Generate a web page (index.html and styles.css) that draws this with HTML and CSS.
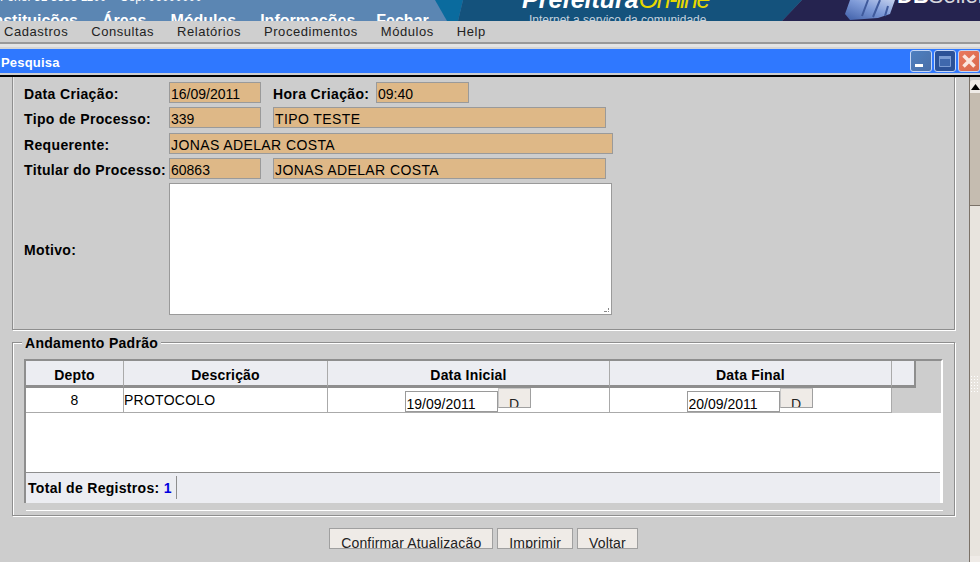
FILE: index.html
```html
<!DOCTYPE html>
<html lang="pt-BR">
<head>
<meta charset="UTF-8" />
<meta name="viewport" content="width=device-width, initial-scale=1" />
<title>Pesquisa</title>
<link rel="stylesheet" href="styles.css">
</head>
<body>
  <header class="banner">
    <svg class="banner-art" width="980" height="21" viewBox="0 0 980 21" aria-hidden="true">
      <defs>
        <linearGradient id="photo" x1="0" y1="1" x2="1" y2="0">
          <stop offset="0" stop-color="#3f5fa8" />
          <stop offset="0.55" stop-color="#7f9bd8" />
          <stop offset="1" stop-color="#c3d0ee" />
        </linearGradient>
      </defs>
      <rect width="980" height="21" fill="#5b86b3" />
      <polygon points="435,0 463,0 458,21 447,21" fill="#0a6b9e" />
      <polygon points="463,0 802,0 782,21 458,21" fill="#14527c" />
      <polygon points="802,0 980,0 980,21 782,21" fill="#25234f" />
      <polygon points="850,0 895,0 890,14 878,18 850,20 845,14" fill="url(#photo)" />
      <path d="M868 0l-6 16M880 0l-7 17M888 6l-3 10" stroke="#3f5a9c" stroke-width="2" fill="none" />
    </svg>
    <div class="banner-left">
      <p class="banner-contact">Fone: 51 3333 1100 &nbsp;&nbsp; Cep: 96000000</p>
      <nav class="banner-nav">
        <span>Instituições</span>
        <span>Áreas</span>
        <span>Módulos</span>
        <span>Informações</span>
        <span class="nav-last">Fechar</span>
      </nav>
    </div>
    <div class="brand">
      <p class="brand-name">Prefeitura<span>On-line</span></p>
      <p class="brand-sub">Internet a serviço da comunidade</p>
    </div>
    <p class="seller"><b>DB</b>Seller</p>
  </header>

  <nav class="menubar">
    <span>Cadastros</span>
    <span>Consultas</span>
    <span>Relatórios</span>
    <span>Procedimentos</span>
    <span>Módulos</span>
    <span>Help</span>
  </nav>
  <div class="menu-edge"></div>

  <div class="titlebar">
    <span class="title">Pesquisa</span>
    <div class="win-buttons">
      <button class="win-btn win-min" type="button" aria-label="Minimizar">
        <svg width="20" height="20" viewBox="0 0 20 20"><rect x="4" y="13" width="8" height="3" fill="#fff" /></svg>
      </button>
      <button class="win-btn win-max" type="button" aria-label="Maximizar">
        <svg width="20" height="20" viewBox="0 0 20 20"><path d="M4.500 5.500h11v10h-11z" fill="#3f68ad" stroke="#7a9bd3" /><rect x="4" y="5" width="12" height="3" fill="#7a9bd3" /></svg>
      </button>
      <button class="win-btn win-close" type="button" aria-label="Fechar">
        <svg width="20" height="20" viewBox="0 0 20 20"><path d="M4.500 4.500l11 11M15.500 4.500l-11 11" stroke="#fbe6df" stroke-width="3.500" /></svg>
      </button>
    </div>
  </div>
  <div class="title-edge"></div>

  <div class="window">
    <main class="content">
      <section class="group-top">
        <div class="row">
          <label class="lbl">Data Criação:</label>
          <input class="field w-short" value="16/09/2011" readonly />
          <label class="lbl lbl-hora">Hora Criação:</label>
          <input class="field w-hora" value="09:40" readonly />
        </div>
        <div class="row">
          <label class="lbl">Tipo de Processo:</label>
          <input class="field w-short" value="339" readonly />
          <input class="field w-name" value="TIPO TESTE" readonly />
        </div>
        <div class="row row-req">
          <label class="lbl">Requerente:</label>
          <input class="field w-full" value="JONAS ADELAR COSTA" readonly />
        </div>
        <div class="row">
          <label class="lbl">Titular do Processo:</label>
          <input class="field w-short" value="60863" readonly />
          <input class="field w-name" value="JONAS ADELAR COSTA" readonly />
        </div>
        <div class="row">
          <label class="lbl">Motivo:</label>
          <textarea class="motivo"></textarea>
        </div>
      </section>

      <fieldset class="group-grid">
        <legend>Andamento Padrão</legend>
        <div class="grid-box">
          <table class="grid">
            <colgroup>
              <col class="c-depto" />
              <col class="c-desc" />
              <col class="c-date" />
              <col class="c-date" />
              <col class="c-extra" />
              <col />
            </colgroup>
            <thead>
              <tr>
                <th>Depto</th>
                <th>Descrição</th>
                <th>Data Inicial</th>
                <th>Data Final</th>
                <th></th>
                <td class="filler"></td>
              </tr>
            </thead>
            <tbody>
              <tr>
                <td class="center">8</td>
                <td class="desc">PROTOCOLO</td>
                <td>
                  <div class="date-cell">
                    <input class="date-input" value="19/09/2011" />
                    <button class="date-btn" type="button">D</button>
                  </div>
                </td>
                <td>
                  <div class="date-cell">
                    <input class="date-input" value="20/09/2011" />
                    <button class="date-btn" type="button">D</button>
                  </div>
                </td>
                <td class="filler" colspan="2"></td>
              </tr>
            </tbody>
          </table>
          <div class="grid-empty"></div>
          <div class="grid-total">
            <span class="total-text">Total de Registros: <b>1</b></span>
          </div>
        </div>
        <div class="grid-foot"></div>
      </fieldset>

      <div class="actions">
        <button class="action" type="button">Confirmar Atualização</button>
        <button class="action" type="button">Imprimir</button>
        <button class="action" type="button">Voltar</button>
      </div>
    </main>

    <div class="scrollbar">
      <div class="scroll-up">
        <svg width="9" height="6" viewBox="0 0 9 6"><polygon points="4.500,0 9,6 0,6" fill="#000" /></svg>
      </div>
      <div class="scroll-thumb"></div>
      <div class="scroll-track">
        <div class="scroll-grip"></div>
      </div>
    </div>
  </div>
</body>
</html>
```

FILE: styles.css
```css
/* Reset */
* {
  box-sizing: border-box;
}

html, body {
  height: 562px;
  overflow: hidden;
}

body {
  margin: 0;
  background: #cdcdcd;
  color: #000;
  font-family: "Liberation Sans", Arial, sans-serif;
  font-size: 14px;
  display: flex;
  flex-direction: column;
}

p {
  margin: 0;
}

/* Site banner, cut off by the window */
.banner {
  position: relative;
  flex: none;
  height: 21px;
  overflow: hidden;
  display: flex;
  background: #5b86b3;
  color: #fff;
}

.banner-art {
  position: absolute;
  left: 0;
  top: 0;
}

.banner-left {
  position: relative;
  width: 522px;
  flex: none;
}

.banner-contact {
  margin-top: -9px;
  height: 12px;
  font-size: 12px;
  line-height: 12px;
  white-space: nowrap;
}

.banner-nav {
  display: flex;
  gap: 24px;
  margin: 9px 0 0 -11px;
  font-size: 16px;
  font-weight: bold;
  line-height: 18px;
  white-space: nowrap;
}

.nav-last {
  margin-left: -3px;
}

.brand {
  position: relative;
  width: 323px;
  flex: none;
}

.brand-name {
  margin-top: -15px;
  font-size: 25px;
  line-height: 28px;
  font-style: italic;
  font-weight: bold;
  white-space: nowrap;
}

.brand-name span {
  color: #e8d800;
  font-weight: normal;
  letter-spacing: -1.5px;
}

.brand-sub {
  margin: 1px 0 0 7px;
  color: #c6d3df;
  font-size: 12px;
  line-height: 13px;
  white-space: nowrap;
}

.seller {
  position: relative;
  margin: -15px 0 0 52px;
  font-size: 22px;
  line-height: 22px;
  color: #d5d5dd;
  white-space: nowrap;
}

.seller b {
  color: #fff;
}

/* Application menu */
.menubar {
  flex: none;
  height: 23px;
  display: flex;
  align-items: center;
  gap: 23px;
  padding-left: 4px;
  background: #cfcfcf;
  border-bottom: 2px solid #999;
  color: #222;
  font-size: 13px;
  letter-spacing: 0.55px;
}

.menu-edge {
  flex: none;
  height: 5px;
  background: #e4e4e4;
  border-bottom: 2px solid #d4d4d4;
}

/* Window chrome */
.titlebar {
  flex: none;
  height: 24px;
  display: flex;
  align-items: center;
  justify-content: space-between;
  padding-left: 1px;
  background: #2f78ff;
  color: #fff;
}

.title {
  padding-top: 2px;
  font-size: 13px;
  font-weight: bold;
  letter-spacing: 0.2px;
}

.win-buttons {
  display: flex;
  gap: 2px;
}

.win-btn {
  width: 22px;
  height: 22px;
  padding: 0;
  border: 1px solid #c4d6f6;
  border-radius: 3px;
}

.win-btn svg {
  display: block;
}

.win-min {
  background: linear-gradient(135deg, #4d7fc0, #4a6fa8);
}

.win-max {
  background: #2b5197;
}

.win-close {
  background: linear-gradient(135deg, #e9795e, #d9684c);
}

.title-edge {
  flex: none;
  height: 4px;
  background: #cdcdcd;
  border-bottom: 2px solid #000;
}

.window {
  flex: 1;
  min-height: 0;
  display: flex;
}

.content {
  width: 969px;
  flex: none;
  padding: 0 14px 0 12px;
}

/* Process data */
.group-top {
  height: 253px;
  padding: 5px 0 0 11px;
  border: 1px solid #8e8e8e;
  border-top: none;
  box-shadow: inset 1px 0 0 #e8e8e8, 1px 1px 0 #fff;
}

.row {
  display: flex;
  align-items: center;
  margin-bottom: 4px;
}

.row-req {
  margin-top: 5px;
}

.lbl {
  width: 145px;
  flex: none;
  padding-top: 2px;
  font-weight: bold;
  letter-spacing: 0.35px;
  white-space: nowrap;
}

.lbl-hora {
  width: 103px;
}

.field {
  height: 21px;
  margin-right: 12px;
  padding: 3px 1px 0;
  border: 1px solid #9a9a9a;
  background: #deb887;
  color: #000;
  font: 14px "Liberation Sans", Arial, sans-serif;
  outline: none;
}

.w-short {
  width: 92px;
}

.w-hora {
  width: 93px;
}

.w-name {
  width: 333px;
  padding-left: 1px;
  letter-spacing: 0.4px;
}

.w-full {
  width: 444px;
  letter-spacing: 0.4px;
}

.motivo {
  width: 443px;
  height: 132px;
  padding: 2px;
  border: 1px solid #9a9a9a;
  border-radius: 0;
  resize: none;
  background-color: #fff;
  background-image:
    linear-gradient(#888, #888),
    linear-gradient(#888, #888),
    linear-gradient(#888, #888);
  background-repeat: no-repeat;
  background-size: 3px 1px, 1px 2px, 1px 1px;
  background-position:
    right 4px bottom 2px,
    right 2px bottom 4px,
    right 2px bottom 2px;
}

/* Andamento padrao */
.group-grid {
  width: 943px;
  height: 183px;
  margin: 3px 0 0;
  padding: 0 0 0 11px;
  min-width: 0;
  border: 1px solid #8e8e8e;
  box-shadow: inset 1px 1px 0 #fff, 1px 1px 0 #fff;
}

.group-grid legend {
  margin-left: -2px;
  padding: 2px 3px 0;
  background: #cdcdcd;
  font-weight: bold;
  line-height: 16px;
  letter-spacing: 0.3px;
}

.grid-box {
  width: 919px;
  margin-top: 8px;
  background: #fff;
  border-top: 2px solid #8e8e8e;
  border-left: 2px solid #8e8e8e;
  border-right: 2px solid #fff;
}

.grid {
  width: 915px;
  table-layout: fixed;
  border-collapse: separate;
  border-spacing: 0;
}

.c-depto {
  width: 98px;
}

.c-desc {
  width: 204px;
}

.c-date {
  width: 282px;
}

.c-extra {
  width: 24px;
}

.grid th {
  height: 27px;
  padding: 3px 0 0;
  background: #ecedf2;
  border-right: 1px solid #aaa;
  border-bottom: 3px solid #8e8e8e;
  letter-spacing: 0.2px;
}

.grid th:nth-child(5) {
  border-right: 2px solid #8e8e8e;
}

.grid td {
  height: 25px;
  padding: 0;
  border-right: 1px solid #aaa;
  border-bottom: 1px solid #aaa;
}

.grid .filler {
  background: #cdcdcd;
  border: none;
}

.center {
  text-align: center;
}

.grid .desc {
  letter-spacing: 0.25px;
}

.date-cell {
  display: flex;
  justify-content: center;
  align-items: flex-start;
  height: 24px;
  margin-left: -2px;
}

.date-input {
  width: 93px;
  height: 21px;
  margin-top: 3px;
  padding: 5px 1px 0;
  border: 1px solid #9a9a9a;
  background: #fff;
  font: 14px "Liberation Sans", Arial, sans-serif;
  outline: none;
}

.date-btn {
  width: 33px;
  height: 20px;
  padding: 6px 0 0;
  overflow: hidden;
  border: 1px solid #a0a0a0;
  border-top-color: #c8c8c8;
  border-left-color: #c8c8c8;
  background: #efebe7;
  color: #222;
  font: 14px/18px "Liberation Sans", Arial, sans-serif;
}

.grid-empty {
  height: 59px;
}

.grid-total {
  height: 31px;
  padding-top: 3px;
  background: #ecedf2;
  border-top: 1px solid #8e8e8e;
  margin-right: 1px;
}

.total-text {
  display: inline-block;
  height: 23px;
  padding: 4px 4px 0 2px;
  border-right: 1px solid #8e8e8e;
  font-weight: bold;
  letter-spacing: 0.3px;
}

.total-text b {
  color: #0000e0;
}

.grid-foot {
  width: 917px;
  height: 6px;
  margin-top: 2px;
  margin-left: 2px;
  background: #cdcdcd;
  border-bottom: 1px solid #fff;
}

/* Bottom buttons */
.actions {
  display: flex;
  justify-content: center;
  gap: 4px;
  margin-top: 12px;
}

.action {
  height: 21px;
  padding: 6px 11px 0;
  overflow: hidden;
  border: 1px solid #a0a0a0;
  background: #efebe7;
  color: #222;
  font: 14px/16px "Liberation Sans", Arial, sans-serif;
  letter-spacing: 0.15px;
  white-space: nowrap;
}

/* Scrollbar */
.scrollbar {
  flex: 1;
  display: flex;
  flex-direction: column;
  padding-top: 3px;
  border-left: 1px solid #7b7268;
}

.scroll-up {
  height: 13px;
  display: flex;
  align-items: center;
  justify-content: center;
  background: #efebe7;
  border-top-left-radius: 3px;
}

.scroll-thumb {
  height: 113px;
  background: #c5bcb0;
  border-bottom: 1px solid #7b7268;
}

.scroll-track {
  flex: 1;
  padding-top: 169px;
  background: #e8e4de;
  border-bottom: 6px solid #efebe7;
}

.scroll-grip {
  width: 9px;
  height: 18px;
  background: radial-gradient(circle, #fff 40%, transparent 45%) 0 0 / 3px 3px;
}
```
